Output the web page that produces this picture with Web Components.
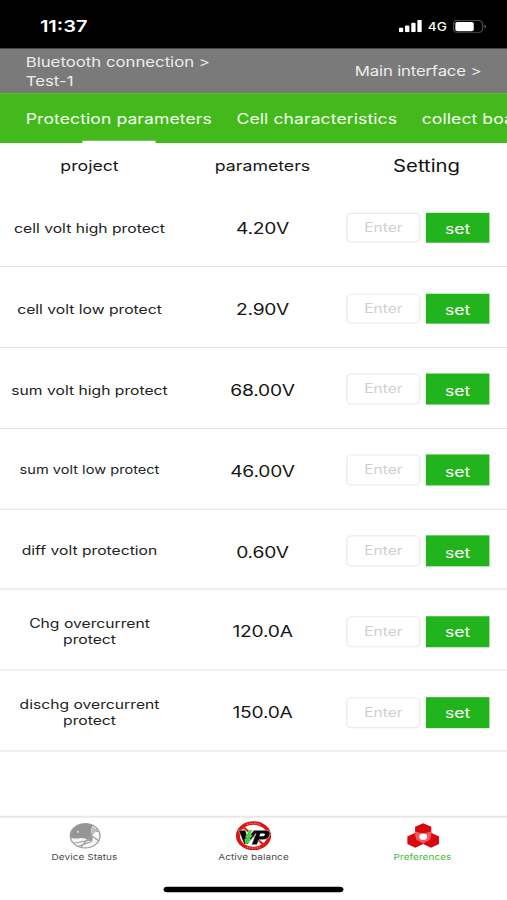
<!DOCTYPE html>
<html lang="en">
<head>
<meta charset="utf-8">
<title>Protection parameters</title>
<style>
html,body{margin:0;height:900px;overflow:hidden;background:#fff}
body{font-family:Inter,Roboto,"Liberation Sans",sans-serif;color:#171717}
</style>
</head>
<body>
<bms-app></bms-app>
<script>
const define=(name,html,render)=>customElements.define(name,class extends HTMLElement{
  connectedCallback(){
    if(this.shadowRoot)return;
    const root=this.attachShadow({mode:'open'});
    root.innerHTML=render?render(this):html;
  }
});

define('status-bar',`<style>
:host{display:flex;height:44px;background:#000;color:#fff;align-items:center;justify-content:space-between;padding:3px 15.5px 0 29.5px;box-sizing:border-box}
b{font-size:14.8px;font-weight:600}
div{display:flex;align-items:center;gap:4px}
span{font-size:10px;font-weight:500}
svg{display:block}
</style><b>11:37</b><div>
<svg width="17" height="11" viewBox="0 0 17 11" fill="#fff"><rect x="0" y="7" width="3.2" height="4" rx=".8"/><rect x="4.6" y="5" width="3.2" height="6" rx=".8"/><rect x="9.2" y="2.6" width="3.2" height="8.4" rx=".8"/><rect x="13.7" y="0" width="3.3" height="11" rx=".8"/></svg>
<span>4G</span>
<svg width="25" height="12" viewBox="0 0 25 12"><rect x=".5" y=".5" width="21.4" height="11" rx="3" fill="none" stroke="#484848"/><rect x="1.8" y="1.8" width="13.6" height="8.4" rx="1.5" fill="#fff"/><path d="M23.3 4.2v3.6q1.4-.5 1.4-1.8t-1.4-1.8" fill="#555"/></svg></div>`);

define('crumb-bar',`<style>
:host{display:flex;height:40px;background:#7a7a7a;color:#ececec;align-items:center;justify-content:space-between;padding:2.4px 19px 0;box-sizing:border-box;font-size:12.4px;line-height:17.8px}
::slotted([slot=right]){letter-spacing:-.13px}
</style><div><slot name="left"></slot></div><div><slot name="right"></slot></div>`);

define('tab-strip',`<style>
:host{display:flex;height:45px;background:#43b91c;color:#f5fff1;gap:18.2px;padding-left:19px;box-sizing:border-box;overflow:hidden;font-size:13px;letter-spacing:.06px;white-space:nowrap}
</style><slot></slot>`);
define('tab-item','',el=>`<style>
:host{display:grid;grid-template-rows:42.6px 2.4px;justify-items:center;align-items:center;flex:none}
span{padding-top:2.5px}
i{display:${el.hasAttribute('active')?'block':'none'};width:54px;height:2.4px;background:#fff}
</style><span><slot></slot></span><i></i>`);

define('table-head',`<style>
:host{display:grid;grid-template-columns:132.4px 123.6px 119px;height:39px;align-items:center;justify-items:center;font-size:13.1px;padding-top:1px;box-sizing:border-box}
b{font-size:15px;font-weight:400;color:#111}
</style><span>project</span><span>parameters</span><b>Setting</b>`);

define('green-button',`<style>
:host{display:grid;place-items:center;width:46.3px;height:27.6px;background:#22b41d;color:#fff;font-size:13px;box-sizing:border-box;padding-top:1px}
</style><slot></slot>`);
define('value-field',`<style>
:host{display:grid;place-items:center;width:54.6px;height:27.6px;border:1px solid #ebebeb;border-radius:4px;color:#cfcfcf;font-size:11.5px;box-sizing:border-box}
</style><slot></slot>`);
define('param-row','',el=>`<style>
:host{display:grid;grid-template-columns:132.4px 123.6px 119px;height:72.9px;align-items:center;border-bottom:1px solid #e3e3e3;box-sizing:border-box;padding-top:3px}
.name{font-size:${el.getAttribute('size')||11.6}px;line-height:14px;text-align:center;color:#222;padding-top:.9px}
.value{font-size:14.2px;letter-spacing:-.15px;text-align:center;color:#161616}
.set{display:flex;gap:4.4px;padding-left:.3px}
</style><span class="name"><slot></slot></span><span class="value">${el.getAttribute('value')}</span>
<span class="set"><value-field>Enter</value-field><green-button>set</green-button></span>`);

const icons={
status:`<svg width="24" height="24" viewBox="0 0 24 24"><circle cx="12" cy="12" r="11" fill="#f6f6f6" stroke="#a3a3a3" stroke-width="1.1"/><path d="M1.1 13.5C1 5 7 1 12.5 1q3 .1 5 1.6l-1.4 5 1.5 5.4-.4 4.5q-5.5-4-9.7-3.2T1.1 13.5" fill="#959595"/><path d="M16 7.6 21.8 8M17.3 12.5l4.6 4M16.8 17.2 7 21.5M3.5 18.8l13-3M9 22 21 5.2" stroke="#a3a3a3" stroke-width="1.1" fill="none"/><path d="m17.4 3.5 4 4-4.6 3" fill="#bcbcbc"/><circle cx="6.7" cy="8.5" r=".8" fill="#e4e4e4"/></svg>`,
balance:`<svg width="27" height="28" viewBox="0 0 27 28"><circle cx="13.5" cy="14" r="11.5" fill="#fff" stroke="#dc1414" stroke-width="3"/><path d="M8.5 3.9q5-2.2 10 0M8.5 24.2q5 2.1 10 0" fill="none" stroke="#fff" stroke-opacity=".5" stroke-width="1" stroke-dasharray="1 .9"/><path d="M5.2 5.5 21.7 22.8" stroke="#e52020" stroke-width="1.8"/><path d="M2.4 9h5.1l1.9 6.8L13.8 9h8.8q3.6.3 3 4-.8 4.5-5 4.6h-3L16 22.2h-4l3.3-10.2-6.2 9.8H6.6Z" fill="#080808" stroke="#fff" stroke-width=".4"/><path d="M18.6 12h2.5q1.1.1.9 1.2-.3 1.2-1.5 1.2h-2.7z" fill="#fff"/><path d="m10.3 9-2.8 6.3h2L7 17.3l.8 4.8 4-4.5-1.7-.2 2.6-3.9h-2l2.2-4.9z" fill="#27d82e" stroke="#e8ffe8" stroke-width=".3"/></svg>`,
prefs:`<svg width="24" height="24" viewBox="0 0 24 24"><g fill="#d8080f"><path d="M12 .7 18 4v7L12 14.5 6 11V4Z"/><path d="m6.2 9.3 5.8 3.5v6.7l-5.8 3.3-5.9-3.3v-6.7Z"/><path d="m17.8 9.3 5.9 3.5v6.7l-5.9 3.3-5.8-3.3v-6.7Z"/></g><path d="M6 8.2 12 10l6-1.8v3.2l-1 4.2L12 19l-5-3.4-1-4.2Z" fill="#f4575e"/><circle cx="12" cy="13" r="2.9" fill="#fff"/></svg>`};
define('nav-item','',el=>`<style>
:host{display:flex;flex-direction:column;align-items:center;flex:1;font-size:7.4px;letter-spacing:.05px;line-height:10px;color:${el.hasAttribute('active')?'#45bb35':'#4a4a4a'}}
div{height:31.4px;display:grid;place-items:center;box-sizing:border-box;padding-top:${el.getAttribute('icon')==='balance'?0:1.5}px}
svg{display:block}
</style><div>${icons[el.getAttribute('icon')]}</div><span><slot></slot></span>`);
define('nav-bar',`<style>
:host{display:flex;height:64px;border-top:1px solid #e4e4e4;box-shadow:inset 0 1px #eee;box-sizing:border-box}
</style><slot></slot>`);
define('home-indicator',`<style>
:host{display:block;width:133.5px;height:4.4px;border-radius:3px;background:#000;margin:0 auto 7.3px}
</style>`);

define('bms-app',`<style>
:host{display:flex;flex-direction:column;width:375px;height:812px;transform:scale(1.352,1.10837);transform-origin:0 0;background:#fff;overflow:hidden}
main{flex:1}
nav-item{padding-top:.7px}
</style>
<status-bar></status-bar>
<crumb-bar><span slot="left">Bluetooth connection &gt;<br>Test-1</span><span slot="right">Main interface &gt;</span></crumb-bar>
<tab-strip><tab-item active>Protection parameters</tab-item><tab-item>Cell characteristics</tab-item><tab-item>collect board</tab-item></tab-strip>
<main><table-head></table-head>
<param-row value="4.20V">cell volt high protect</param-row>
<param-row value="2.90V">cell volt low protect</param-row>
<param-row value="68.00V">sum volt high protect</param-row>
<param-row value="46.00V" size="10.8">sum volt low protect</param-row>
<param-row value="0.60V">diff volt protection</param-row>
<param-row value="120.0A">Chg overcurrent<br>protect</param-row>
<param-row value="150.0A">dischg overcurrent<br>protect</param-row></main>
<nav-bar><nav-item icon="status">Device Status</nav-item><nav-item icon="balance">Active balance</nav-item><nav-item icon="prefs" active>Preferences</nav-item></nav-bar>
<home-indicator></home-indicator>`);
</script>
</body>
</html>
